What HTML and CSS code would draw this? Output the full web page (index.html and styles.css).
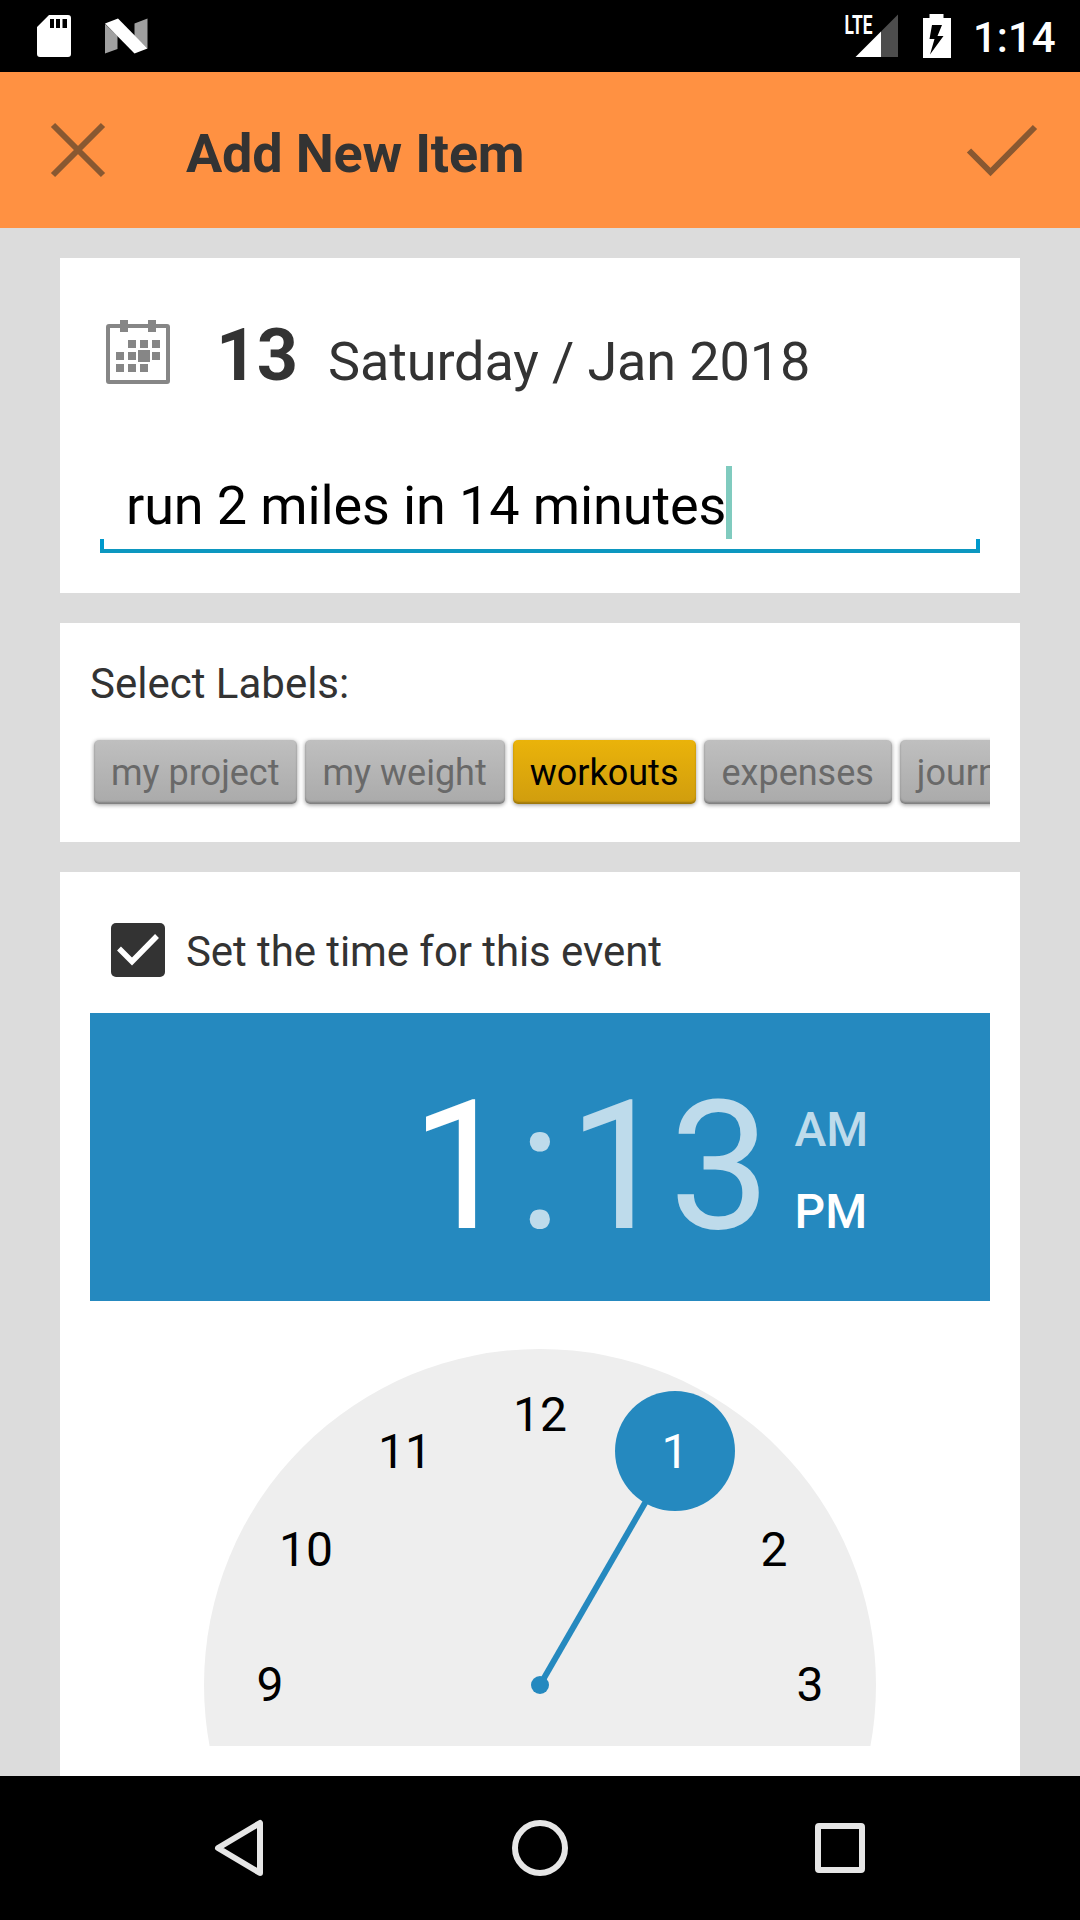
FILE: index.html
```html
<!DOCTYPE html>
<html lang="en">
<head>
  <meta charset="UTF-8">
  <meta name="viewport" content="width=device-width, initial-scale=1.0">
  <title>Add New Item</title>
  <link rel="stylesheet" href="styles.css">
</head>
<body>

  <div class="status-bar">
    <svg class="status-left" width="160" height="72" viewBox="0 0 160 72">
      <path fill="#fff" fill-rule="evenodd" d="M49 15h19a3 3 0 0 1 3 3v36a3 3 0 0 1-3 3H40a3 3 0 0 1-3-3V27zM50 19v9h4v-9zM56 19v9h4v-9zM62.500 19v9h4.500v-9z"/>
      <path fill="#a0a0a0" d="M105 24l12.500 12v13L105 53.500zM147.500 18.500v30L134.500 36V23.500z"/>
      <path fill="#fff" d="M105 23.500l13-5 29.500 30-13 5z"/>
    </svg>
    <div class="status-right">
      <svg width="120" height="72" viewBox="840 0 120 72">
        <text class="lte" x="844.500" y="34" textLength="28" lengthAdjust="spacingAndGlyphs">LTE</text>
        <path fill="#fff" d="M855.500 57L881 31.500V57z"/>
        <path fill="#4d4d4d" d="M881 31.500L898 14.500V57h-17z"/>
        <path fill="#fff" fill-rule="evenodd" d="M929.500 14h14v4h7.500v40h-28V18h6.500zM932 25l-2.500 14h5l-4.500 15.500L943.500 36h-6l4.500-11z"/>
      </svg>
      <span class="clock-text">1:14</span>
    </div>
  </div>

  <header class="header">
    <svg class="close-icon" width="56" height="56" viewBox="0 0 56 56">
      <path d="M3 3l50 50M53 3L3 53"/>
    </svg>
    <h1>Add New Item</h1>
    <svg class="done-icon" width="72" height="54" viewBox="0 0 72 54">
      <path d="M3 27.500l21.500 21.500L69 4"/>
    </svg>
  </header>

  <main class="content">
    <section class="card item-card">
      <div class="date-row">
        <svg class="calendar-icon" width="64" height="64" viewBox="0 0 64 64">
          <rect x="2" y="6" width="60" height="56" rx="1" fill="none" stroke="#868686" stroke-width="4"/>
          <path fill="#868686" d="M14 0h8v12h-8zM42 0h8v12h-8zM22 20h8v8h-8zM34 20h8v8h-8zM46 20h8v8h-8zM10 32h8v8h-8zM22 32h8v8h-8zM46 32h8v8h-8zM32 30h12v12H32zM10 44h8v8h-8zM22 44h8v8h-8zM34 44h8v8h-8z"/>
        </svg>
        <span class="day">13</span>
        <span class="date">Saturday / Jan 2018</span>
      </div>
      <div class="item-input"><span>run 2 miles in 14 minutes</span><i class="cursor"></i></div>
    </section>

    <section class="card labels-card">
      <h2>Select Labels:</h2>
      <div class="labels">
        <button class="label-btn">my project</button>
        <button class="label-btn">my weight</button>
        <button class="label-btn selected">workouts</button>
        <button class="label-btn">expenses</button>
        <button class="label-btn">journal</button>
      </div>
    </section>

    <section class="card time-card">
      <div class="check-row">
        <svg width="54" height="54" viewBox="0 0 54 54">
          <rect width="54" height="54" rx="5" fill="#333"/>
          <path d="M8 25.500L21 38.500 46 13" fill="none" stroke="#fff" stroke-width="5.500"/>
        </svg>
        <span>Set the time for this event</span>
      </div>

      <div class="time-header">
        <div class="time">
          <span class="hour">1</span><span class="colon">:</span><span>13</span>
        </div>
        <div class="ampm">
          <span>AM</span>
          <span class="active">PM</span>
        </div>
      </div>

      <svg class="dial" width="672" height="397" viewBox="0 0 672 397">
        <circle cx="336" cy="336" r="336" fill="#eee"/>
        <line x1="336" y1="336" x2="471" y2="102" stroke="#2589bf" stroke-width="6"/>
        <circle cx="336" cy="336" r="9" fill="#2589bf"/>
        <circle cx="471" cy="102" r="60" fill="#2589bf"/>
        <text x="66" y="352">9</text>
        <text x="102" y="217">10</text>
        <text x="201" y="119">11</text>
        <text x="336" y="82">12</text>
        <text x="471" y="119" class="current">1</text>
        <text x="570" y="217">2</text>
        <text x="606" y="352">3</text>
      </svg>
    </section>
  </main>

  <nav class="nav-bar">
    <svg width="56" height="60" viewBox="0 0 56 60"><path d="M48 5v50L6 30z"/></svg>
    <svg width="56" height="56" viewBox="0 0 56 56"><circle cx="28" cy="28" r="25"/></svg>
    <svg width="56" height="50" viewBox="0 0 56 50"><rect x="6" y="3" width="44" height="44" rx="1"/></svg>
  </nav>

</body>
</html>
```
FILE: styles.css
```css
* { box-sizing: border-box; }

body {
  margin: 0;
  width: 1080px;
  height: 1920px;
  display: flex;
  flex-direction: column;
  overflow: hidden;
  font-family: Roboto, sans-serif;
  color: #333;
  background-color: #dcdcdc;
}

svg { display: block; flex-shrink: 0; }

/* status bar */
.status-bar {
  height: 72px;
  display: flex;
  justify-content: space-between;
  background-color: #000;
  color: #fff;
}

.status-right {
  display: flex;
  align-items: center;
  padding-right: 24px;
}

.lte {
  font-size: 26px;
  font-weight: bold;
  fill: #fff;
}

.clock-text {
  width: 83px;
  margin-left: 13px;
  padding-top: 2px;
  font-size: 42px;
  font-weight: 500;
}

/* header */
.header {
  height: 156px;
  display: flex;
  align-items: center;
  padding: 0 42px 0 50px;
  background-color: #ff9142;
}

.header h1 {
  flex: 1;
  margin: 0;
  padding: 7px 0 0 80px;
  font-size: 54px;
  font-weight: bold;
  letter-spacing: -0.2px;
}

.close-icon,
.done-icon {
  fill: none;
  stroke: #895831;
  stroke-width: 6;
}

/* cards */
.content {
  height: 1548px;
  padding: 30px 60px 0;
  display: flex;
  flex-direction: column;
  gap: 30px;
  overflow: hidden;
}

.card {
  flex-shrink: 0;
  padding: 0 30px;
  background-color: #fff;
}

.item-card { height: 335px; }
.labels-card { height: 219px; }
.time-card { height: 904px; }

.date-row {
  height: 208px;
  display: flex;
  align-items: baseline;
  padding: 55px 0 0 16px;
}

.calendar-icon {
  align-self: flex-start;
  margin-top: 7px;
}

.day {
  width: 83px;
  margin: 0 29px 0 46px;
  font-size: 72px;
  font-weight: bold;
  letter-spacing: -0.5px;
}

.date {
  font-size: 54px;
  letter-spacing: -0.12px;
}

.item-input {
  position: relative;
  width: 880px;
  height: 87px;
  margin-left: 10px;
  padding-left: 26px;
  display: flex;
  align-items: flex-start;
  font-size: 54px;
  line-height: 79px;
  letter-spacing: -0.12px;
  color: #000;
  border-bottom: 4px solid #0c97c0;
}

/* short ticks at both ends of the underline */
.item-input::before,
.item-input::after {
  content: "";
  position: absolute;
  bottom: 0;
  width: 4px;
  height: 10px;
  background-color: #0099cc;
}

.item-input::before { left: 0; }
.item-input::after { right: 0; }

.cursor {
  width: 6px;
  height: 73px;
  background-color: #80cbbf;
}

/* labels */
.labels-card h2 {
  margin: 0;
  padding-top: 36px;
  font-size: 42px;
  line-height: 50px;
  font-weight: normal;
}

.labels {
  display: flex;
  gap: 8px;
  height: 74px;
  margin-top: 27px;
  padding: 4px 0 0 4px;
  overflow: hidden;
}

.label-btn {
  flex-shrink: 0;
  height: 64px;
  padding: 2px 18px 0 17px;
  border: none;
  border-radius: 5px;
  font-family: inherit;
  font-size: 36px;
  color: #696969;
  background: linear-gradient(#bfbfbf, #aaa);
  box-shadow: 0 1px 4px rgba(0, 0, 0, 0.4), inset 0 -2px 2px rgba(0, 0, 0, 0.25);
}

.label-btn.selected {
  color: #000;
  background: linear-gradient(#eab30a, #d09d0e);
}

/* time picker */
.check-row {
  height: 141px;
  display: flex;
  align-items: flex-start;
  padding: 51px 0 0 21px;
  font-size: 42px;
  line-height: 58px;
  letter-spacing: -0.08px;
}

.check-row span { margin-left: 21px; }

.time-header {
  height: 288px;
  display: flex;
  align-items: flex-end;
  padding-left: 321px;
  color: #bedbeb;
  background-color: #2589bf;
}

.time {
  display: flex;
  font-size: 180px;
  line-height: 210px;
  margin-bottom: 29px;
}

.hour { color: #fff; }
.colon { width: 55px; margin-right: 1px; text-align: center; }

.ampm {
  display: flex;
  flex-direction: column;
  margin: 0 0 61px 24px;
  font-size: 48px;
  line-height: 56px;
  font-weight: 500;
  gap: 26px;
}

.active { color: #fff; }

.dial {
  margin: 48px auto 0;
  overflow: hidden;
}

.dial text {
  font-size: 48px;
  text-anchor: middle;
  fill: #000;
}

.dial .current { fill: #fff; }

/* navigation bar */
.nav-bar {
  height: 144px;
  display: flex;
  align-items: center;
  justify-content: space-between;
  padding: 0 212px;
  background-color: #000;
}

.nav-bar svg {
  fill: none;
  stroke: #e6e6e6;
  stroke-width: 6;
  stroke-linejoin: round;
}
```
